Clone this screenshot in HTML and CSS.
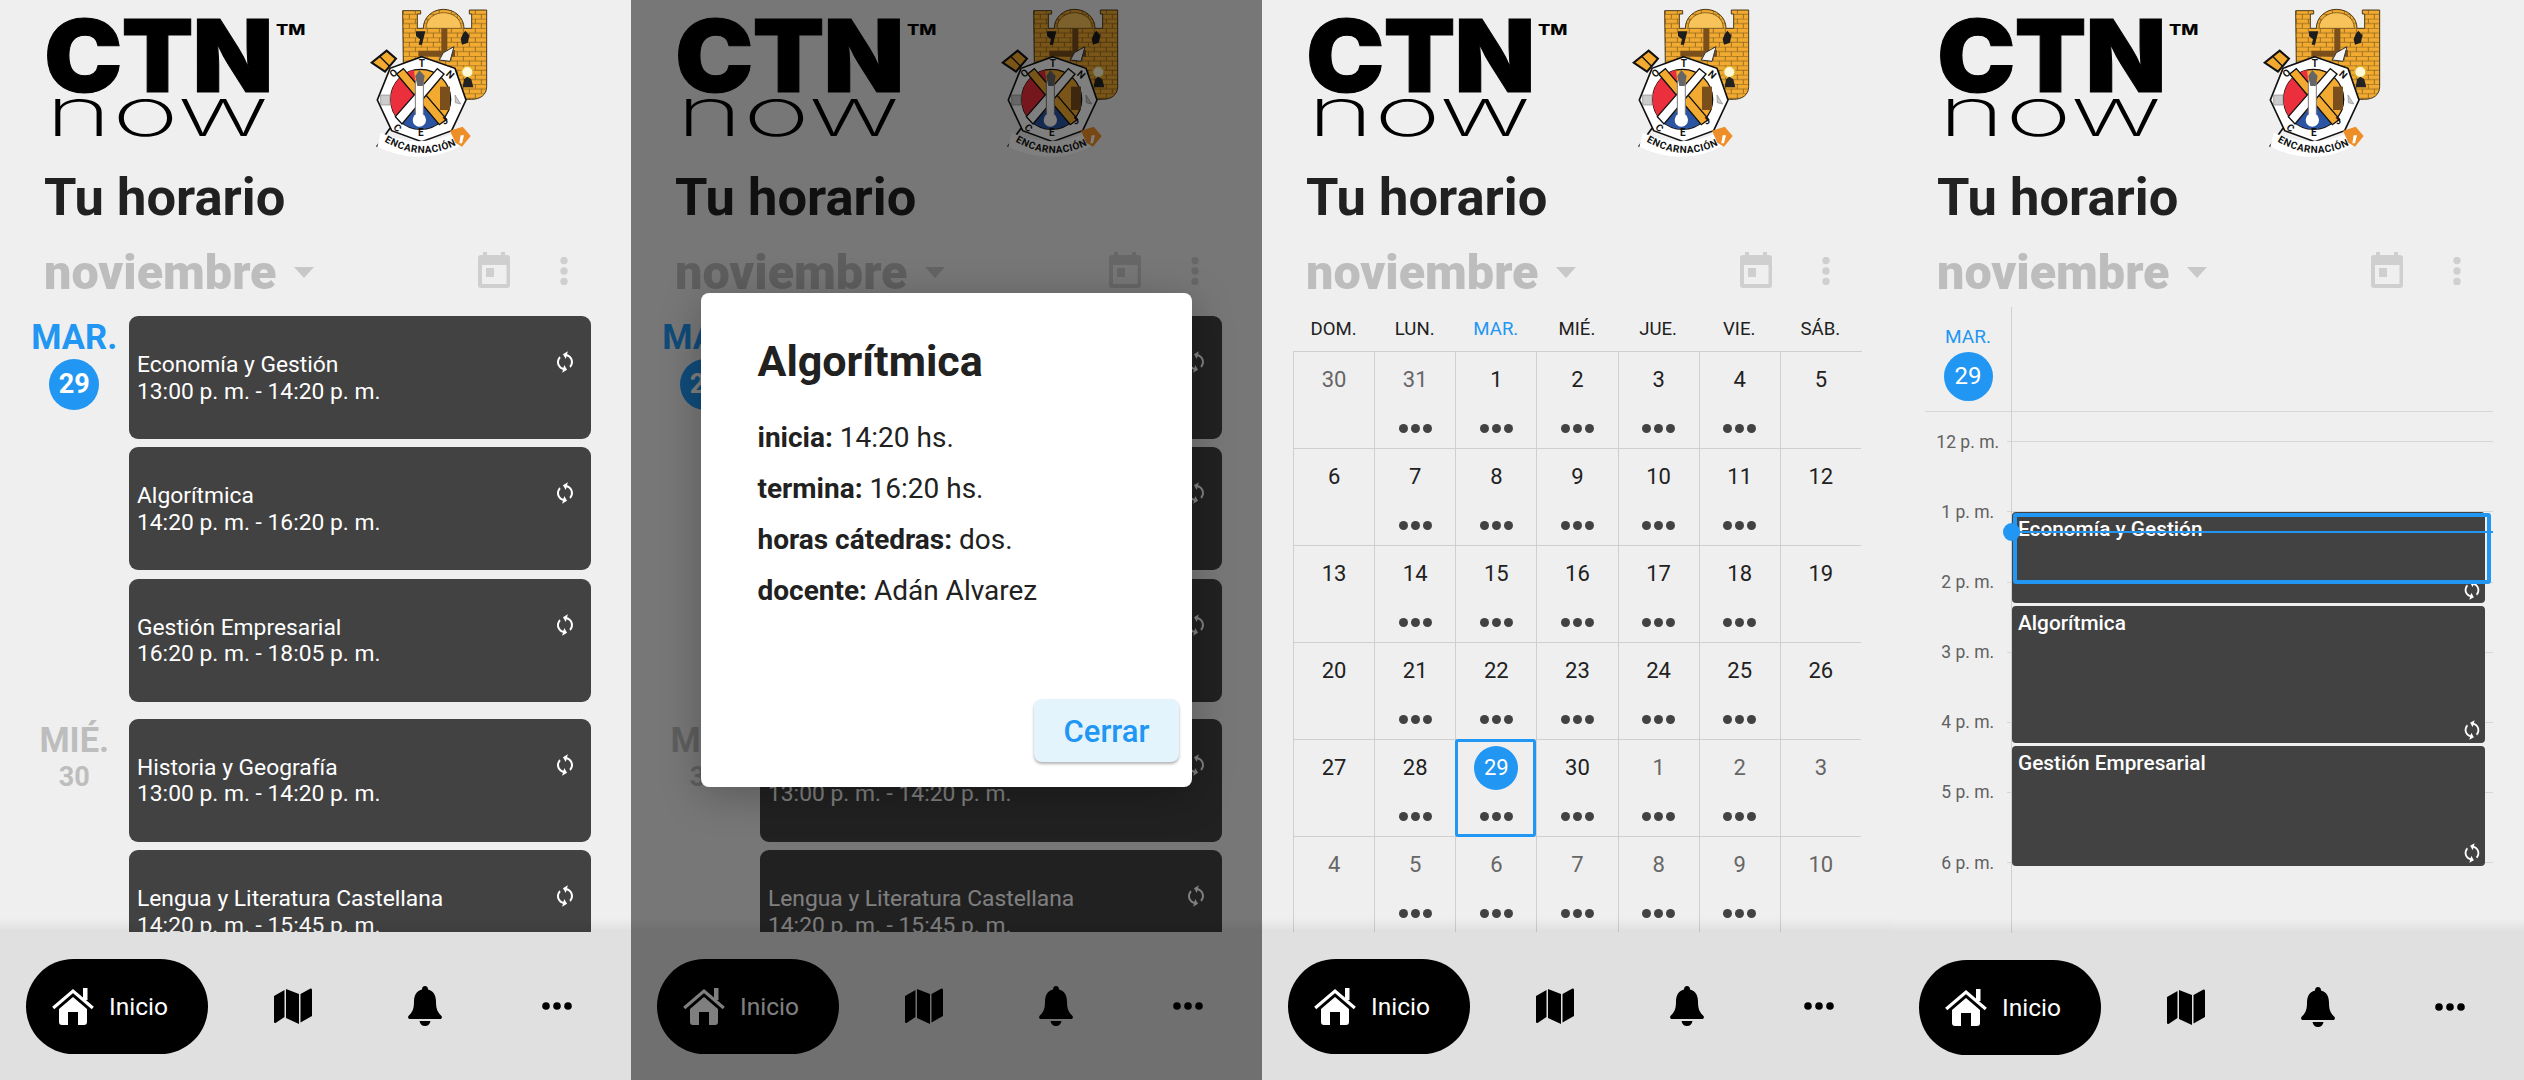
FILE: index.html
```html
<!DOCTYPE html>
<html lang="es">
    <head>
        <title>CTN now</title>
        <link rel="stylesheet" href="styles.css">
    </head>
    <body>
        <svg class="sprite" xmlns="http://www.w3.org/2000/svg">
            <defs>
                <pattern id="bricks" width="36" height="28" patternUnits="userSpaceOnUse">
                    <rect width="36" height="28" fill="#f3aa30"/>
                    <path d="M0 .7H36M0 14.7H36M10 0V14M28 14V28" stroke="#8a6420" stroke-width="2.4" fill="none"/>
                </pattern>
                <path id="crest-band" d="M133 424Q245 490 354 432"/>
            </defs>
            <symbol id="crest" viewBox="0 0 540 510">
                <path d="M188 32H242V42H232V85H250C250 50 280 28 310 28C342 28 372 50 372 85H395V42H388V30H440V260C440 285 420 298 395 298H340L190 200Z" fill="url(#bricks)" stroke="#4a3a1a" stroke-width="3"/>
                <path d="M258 85C258 55 285 38 310 38C338 38 364 55 364 85Z" fill="#f8c35a" stroke="#8a6420" stroke-width="3"/>
                <path d="M304 85H322V150H345V170H300L235 168V152H304Z" fill="#7a4f1c"/>
                <path d="M228 94H256L250 118L246 134H236L240 118L228 108ZM368 102L376 92L388 106L384 128L366 134L362 118Z" fill="#1d1d1d"/>
                <path d="M342 140L330 184L298 180L310 158Z" fill="#f4f4f4" stroke="#333" stroke-width="3"/>
                <path d="M135 215L95 188L140 152L168 176Z" fill="#f3aa30" stroke="#111" stroke-width="6"/>
                <path d="M118 168L150 200" stroke="#111" stroke-width="4"/>
                <circle cx="382" cy="216" r="17" fill="#fff8d8" stroke="#e5b52c" stroke-width="4"/>
                <path d="M368 262L372 238L382 230L394 238L400 262Z" fill="#222"/>
                <path d="M245 170L345 205L378 300L335 392L245 425L155 392L112 300L150 205Z" fill="#fff" stroke="#111" stroke-width="5"/>
                <circle cx="242" cy="298" r="90" fill="#f3aa30" stroke="#111" stroke-width="4"/>
                <path d="M222 210A90 90 0 0 0 175 358L232 298Z" fill="#ec2f3c"/>
                <path d="M186 368A90 90 0 0 0 310 356L245 310Z" fill="#2b55a3"/>
                <path d="M300 260H330V330H300Z" fill="#7a4f1c"/>
                <path d="M170 222L190 206L320 358L298 374Z" fill="#f3aa30" stroke="#111" stroke-width="4"/>
                <path d="M312 222L292 206L166 350L186 372Z" fill="#fff" stroke="#111" stroke-width="4"/>
                <rect x="226" y="238" width="24" height="112" rx="8" fill="#fff" stroke="#777" stroke-width="3"/>
                <circle cx="238" cy="360" r="20" fill="#fff"/>
                <path d="M238 210L254 228L248 258H232L226 228Z" fill="#666"/>
                <path d="M345 285L362 312L346 308ZM122 285H150V315H122Z" fill="#ccc" stroke="#888" stroke-width="2"/>
                <path d="M110 440L150 385" stroke="#111" stroke-width="5"/>
                <path d="M122 398Q245 452 358 392L372 432Q245 505 112 440Z" fill="#fff"/>
                <text class="crest-letter" x="160" y="234" transform="rotate(-42 160 234)">O</text>
                <text class="crest-letter" x="236" y="200">T</text>
                <text class="crest-letter" x="316" y="224" transform="rotate(42 316 224)">N</text>
                <text class="crest-letter" x="158" y="385" transform="rotate(42 158 385)">C</text>
                <text class="crest-letter" x="234" y="408">E</text>
                <text class="crest-letter" x="314" y="376" transform="rotate(-42 314 376)">J</text>
                <text class="crest-band-text"><textPath href="#crest-band" textLength="226">ENCARNACIÓN</textPath></text>
                <path d="M330 392L368 380L392 408L366 440L346 428Z" fill="#ee8e28"/>
                <path d="M362 406H372L366 430H358Z" fill="#fff"/>
            </symbol>
            <symbol id="i-home" viewBox="0 0 42 37">
                <path d="M31 0H35.5V12H31Z" fill="currentColor"/>
                <path d="M1.2 20L21 3L40.8 20" fill="none" stroke="currentColor" stroke-width="3.2"/>
                <path d="M7 21L21 9L35 21V34Q35 37 32 37H26V24H16V37H10Q7 37 7 34Z" fill="currentColor"/>
            </symbol>
            <symbol id="i-map" viewBox="0 0 38 36">
                <path d="M0 8L10.500 2V29L1.500 35Q0 35.500 0 33.500Z M12 1L25 6V36L12 30Z M26.500 6L36.500 .5Q38 0 38 2V28L26.500 34.500Z" fill="currentColor"/>
            </symbol>
            <symbol id="i-bell" viewBox="0 0 34 40">
                <path d="M17 0C15 0 14 1.500 14 3.500C8 5 6 10 6 16C6 24 3.500 27 .5 30C-.5 31.500 .5 33 2 33H32C33.500 33 34.500 31.500 33.500 30C30.500 27 28 24 28 16C28 10 26 5 20 3.500C20 1.500 19 0 17 0ZM11.500 35H22.500C22 38 20 40 17 40C14 40 12 38 11.500 35Z" fill="currentColor"/>
            </symbol>
            <symbol id="i-more" viewBox="0 0 30 10">
                <circle cx="4" cy="5" r="3.800" fill="currentColor"/>
                <circle cx="15" cy="5" r="3.800" fill="currentColor"/>
                <circle cx="26" cy="5" r="3.800" fill="currentColor"/>
            </symbol>
            <symbol id="i-sync" viewBox="0 0 24 24">
                <path d="M12 4V1L8 5l4 4V6c3.310 0 6 2.690 6 6 0 1.010-.25 1.970-.7 2.800l1.460 1.460C19.540 15.030 20 13.570 20 12c0-4.420-3.580-8-8-8zm0 14c-3.310 0-6-2.690-6-6 0-1.010.25-1.970.7-2.800L5.240 7.740C4.460 8.970 4 10.430 4 12c0 4.420 3.580 8 8 8v3l4-4-4-4v3z" fill="currentColor"/>
            </symbol>
            <symbol id="i-cal" viewBox="0 0 32 36">
                <path fill-rule="evenodd" d="M5 0H9V3H23V0H27V3H29Q32 3 32 6V33Q32 36 29 36H3Q0 36 0 33V6Q0 3 3 3H5ZM4 13V32H28.500V13Z M8 16H16V25H8Z" fill="currentColor"/>
            </symbol>
            <symbol id="i-kebab" viewBox="0 0 8 28">
                <circle cx="4" cy="3.500" r="3.700" fill="currentColor"/>
                <circle cx="4" cy="14" r="3.700" fill="currentColor"/>
                <circle cx="4" cy="24.500" r="3.700" fill="currentColor"/>
            </symbol>
        </svg>

        <div class="screens">
            <!-- agenda -->
            <section class="phone">
                <header class="brand">
                    <div class="logo">
                        <span class="logo-ctn">CTN</span><span class="logo-tm">TM</span>
                        <span class="logo-now">now</span>
                    </div>
                    <svg class="crest"><use href="#crest"/></svg>
                </header>
                <h1 class="title">Tu horario</h1>
                <div class="month-bar">
                    <span class="month">noviembre</span>
                    <span class="month-arrow"></span>
                    <div class="spacer"></div>
                    <svg class="icon-cal"><use href="#i-cal"/></svg>
                    <svg class="icon-kebab"><use href="#i-kebab"/></svg>
                </div>
                <main class="content agenda">
                    <div class="day-group">
                        <div class="day-col">
                            <div class="day-name today">MAR.</div>
                            <div class="day-badge">29</div>
                        </div>
                        <div class="day-cards">
                            <div class="card"><p>Economía y Gestión<br>13:00 p. m. - 14:20 p. m.</p><svg class="card-sync"><use href="#i-sync"/></svg></div>
                            <div class="card"><p>Algorítmica<br>14:20 p. m. - 16:20 p. m.</p><svg class="card-sync"><use href="#i-sync"/></svg></div>
                            <div class="card"><p>Gestión Empresarial<br>16:20 p. m. - 18:05 p. m.</p><svg class="card-sync"><use href="#i-sync"/></svg></div>
                        </div>
                    </div>
                    <div class="day-group">
                        <div class="day-col">
                            <div class="day-name">MIÉ.</div>
                            <div class="day-num">30</div>
                        </div>
                        <div class="day-cards">
                            <div class="card"><p>Historia y Geografía<br>13:00 p. m. - 14:20 p. m.</p><svg class="card-sync"><use href="#i-sync"/></svg></div>
                            <div class="card"><p>Lengua y Literatura Castellana<br>14:20 p. m. - 15:45 p. m.</p><svg class="card-sync"><use href="#i-sync"/></svg></div>
                        </div>
                    </div>
                </main>
                <nav class="tabbar">
                    <a class="tab-active" href="#"><svg class="icon-home"><use href="#i-home"/></svg>Inicio</a>
                    <a class="tab" href="#"><svg class="icon-map"><use href="#i-map"/></svg></a>
                    <a class="tab" href="#"><svg class="icon-bell"><use href="#i-bell"/></svg></a>
                    <a class="tab" href="#"><svg class="icon-more"><use href="#i-more"/></svg></a>
                </nav>
            </section>

            <!-- agenda with the class dialog open -->
            <section class="phone">
                <header class="brand">
                    <div class="logo">
                        <span class="logo-ctn">CTN</span><span class="logo-tm">TM</span>
                        <span class="logo-now">now</span>
                    </div>
                    <svg class="crest"><use href="#crest"/></svg>
                </header>
                <h1 class="title">Tu horario</h1>
                <div class="month-bar">
                    <span class="month">noviembre</span>
                    <span class="month-arrow"></span>
                    <div class="spacer"></div>
                    <svg class="icon-cal"><use href="#i-cal"/></svg>
                    <svg class="icon-kebab"><use href="#i-kebab"/></svg>
                </div>
                <main class="content agenda">
                    <div class="day-group">
                        <div class="day-col">
                            <div class="day-name today">MAR.</div>
                            <div class="day-badge">29</div>
                        </div>
                        <div class="day-cards">
                            <div class="card"><p>Economía y Gestión<br>13:00 p. m. - 14:20 p. m.</p><svg class="card-sync"><use href="#i-sync"/></svg></div>
                            <div class="card"><p>Algorítmica<br>14:20 p. m. - 16:20 p. m.</p><svg class="card-sync"><use href="#i-sync"/></svg></div>
                            <div class="card"><p>Gestión Empresarial<br>16:20 p. m. - 18:05 p. m.</p><svg class="card-sync"><use href="#i-sync"/></svg></div>
                        </div>
                    </div>
                    <div class="day-group">
                        <div class="day-col">
                            <div class="day-name">MIÉ.</div>
                            <div class="day-num">30</div>
                        </div>
                        <div class="day-cards">
                            <div class="card"><p>Historia y Geografía<br>13:00 p. m. - 14:20 p. m.</p><svg class="card-sync"><use href="#i-sync"/></svg></div>
                            <div class="card"><p>Lengua y Literatura Castellana<br>14:20 p. m. - 15:45 p. m.</p><svg class="card-sync"><use href="#i-sync"/></svg></div>
                        </div>
                    </div>
                </main>
                <nav class="tabbar">
                    <a class="tab-active" href="#"><svg class="icon-home"><use href="#i-home"/></svg>Inicio</a>
                    <a class="tab" href="#"><svg class="icon-map"><use href="#i-map"/></svg></a>
                    <a class="tab" href="#"><svg class="icon-bell"><use href="#i-bell"/></svg></a>
                    <a class="tab" href="#"><svg class="icon-more"><use href="#i-more"/></svg></a>
                </nav>
                <div class="scrim"></div>
                <div class="dialog">
                    <h2>Algorítmica</h2>
                    <p><b>inicia:</b> 14:20 hs.</p>
                    <p><b>termina:</b> 16:20 hs.</p>
                    <p><b>horas cátedras:</b> dos.</p>
                    <p><b>docente:</b> Adán Alvarez</p>
                    <button class="dialog-close">Cerrar</button>
                </div>
            </section>

            <!-- month view -->
            <section class="phone">
                <header class="brand">
                    <div class="logo">
                        <span class="logo-ctn">CTN</span><span class="logo-tm">TM</span>
                        <span class="logo-now">now</span>
                    </div>
                    <svg class="crest"><use href="#crest"/></svg>
                </header>
                <h1 class="title">Tu horario</h1>
                <div class="month-bar">
                    <span class="month">noviembre</span>
                    <span class="month-arrow"></span>
                    <div class="spacer"></div>
                    <svg class="icon-cal"><use href="#i-cal"/></svg>
                    <svg class="icon-kebab"><use href="#i-kebab"/></svg>
                </div>
                <main class="content month-view">
                    <div class="cal-head">
                        <span>DOM.</span><span>LUN.</span><span class="today">MAR.</span><span>MIÉ.</span><span>JUE.</span><span>VIE.</span><span>SÁB.</span>
                    </div>
                    <div class="cal-grid">
                        <div class="cell other"><span class="num">30</span></div>
                        <div class="cell other"><span class="num">31</span><div class="dots"><i></i><i></i><i></i></div></div>
                        <div class="cell"><span class="num">1</span><div class="dots"><i></i><i></i><i></i></div></div>
                        <div class="cell"><span class="num">2</span><div class="dots"><i></i><i></i><i></i></div></div>
                        <div class="cell"><span class="num">3</span><div class="dots"><i></i><i></i><i></i></div></div>
                        <div class="cell"><span class="num">4</span><div class="dots"><i></i><i></i><i></i></div></div>
                        <div class="cell"><span class="num">5</span></div>

                        <div class="cell"><span class="num">6</span></div>
                        <div class="cell"><span class="num">7</span><div class="dots"><i></i><i></i><i></i></div></div>
                        <div class="cell"><span class="num">8</span><div class="dots"><i></i><i></i><i></i></div></div>
                        <div class="cell"><span class="num">9</span><div class="dots"><i></i><i></i><i></i></div></div>
                        <div class="cell"><span class="num">10</span><div class="dots"><i></i><i></i><i></i></div></div>
                        <div class="cell"><span class="num">11</span><div class="dots"><i></i><i></i><i></i></div></div>
                        <div class="cell"><span class="num">12</span></div>

                        <div class="cell"><span class="num">13</span></div>
                        <div class="cell"><span class="num">14</span><div class="dots"><i></i><i></i><i></i></div></div>
                        <div class="cell"><span class="num">15</span><div class="dots"><i></i><i></i><i></i></div></div>
                        <div class="cell"><span class="num">16</span><div class="dots"><i></i><i></i><i></i></div></div>
                        <div class="cell"><span class="num">17</span><div class="dots"><i></i><i></i><i></i></div></div>
                        <div class="cell"><span class="num">18</span><div class="dots"><i></i><i></i><i></i></div></div>
                        <div class="cell"><span class="num">19</span></div>

                        <div class="cell"><span class="num">20</span></div>
                        <div class="cell"><span class="num">21</span><div class="dots"><i></i><i></i><i></i></div></div>
                        <div class="cell"><span class="num">22</span><div class="dots"><i></i><i></i><i></i></div></div>
                        <div class="cell"><span class="num">23</span><div class="dots"><i></i><i></i><i></i></div></div>
                        <div class="cell"><span class="num">24</span><div class="dots"><i></i><i></i><i></i></div></div>
                        <div class="cell"><span class="num">25</span><div class="dots"><i></i><i></i><i></i></div></div>
                        <div class="cell"><span class="num">26</span></div>

                        <div class="cell"><span class="num">27</span></div>
                        <div class="cell"><span class="num">28</span><div class="dots"><i></i><i></i><i></i></div></div>
                        <div class="cell selected"><span class="num">29</span><div class="dots"><i></i><i></i><i></i></div></div>
                        <div class="cell"><span class="num">30</span><div class="dots"><i></i><i></i><i></i></div></div>
                        <div class="cell other"><span class="num">1</span><div class="dots"><i></i><i></i><i></i></div></div>
                        <div class="cell other"><span class="num">2</span><div class="dots"><i></i><i></i><i></i></div></div>
                        <div class="cell other"><span class="num">3</span></div>

                        <div class="cell other"><span class="num">4</span></div>
                        <div class="cell other"><span class="num">5</span><div class="dots"><i></i><i></i><i></i></div></div>
                        <div class="cell other"><span class="num">6</span><div class="dots"><i></i><i></i><i></i></div></div>
                        <div class="cell other"><span class="num">7</span><div class="dots"><i></i><i></i><i></i></div></div>
                        <div class="cell other"><span class="num">8</span><div class="dots"><i></i><i></i><i></i></div></div>
                        <div class="cell other"><span class="num">9</span><div class="dots"><i></i><i></i><i></i></div></div>
                        <div class="cell other"><span class="num">10</span></div>
                    </div>
                </main>
                <nav class="tabbar">
                    <a class="tab-active" href="#"><svg class="icon-home"><use href="#i-home"/></svg>Inicio</a>
                    <a class="tab" href="#"><svg class="icon-map"><use href="#i-map"/></svg></a>
                    <a class="tab" href="#"><svg class="icon-bell"><use href="#i-bell"/></svg></a>
                    <a class="tab" href="#"><svg class="icon-more"><use href="#i-more"/></svg></a>
                </nav>
            </section>

            <!-- day view -->
            <section class="phone">
                <header class="brand">
                    <div class="logo">
                        <span class="logo-ctn">CTN</span><span class="logo-tm">TM</span>
                        <span class="logo-now">now</span>
                    </div>
                    <svg class="crest"><use href="#crest"/></svg>
                </header>
                <h1 class="title">Tu horario</h1>
                <div class="month-bar">
                    <span class="month">noviembre</span>
                    <span class="month-arrow"></span>
                    <div class="spacer"></div>
                    <svg class="icon-cal"><use href="#i-cal"/></svg>
                    <svg class="icon-kebab"><use href="#i-kebab"/></svg>
                </div>
                <main class="content week">
                    <div class="week-head">
                        <div class="week-day">MAR.</div>
                        <div class="week-badge">29</div>
                    </div>
                    <div class="hours">
                        <div class="hour"><span>12 p. m.</span><i></i></div>
                        <div class="hour"><span>1 p. m.</span><i></i></div>
                        <div class="hour"><span>2 p. m.</span><i></i></div>
                        <div class="hour"><span>3 p. m.</span><i></i></div>
                        <div class="hour"><span>4 p. m.</span><i></i></div>
                        <div class="hour"><span>5 p. m.</span><i></i></div>
                        <div class="hour"><span>6 p. m.</span><i></i></div>
                    </div>
                    <div class="events">
                        <div class="event ev-short">Economía y Gestión<svg class="event-sync"><use href="#i-sync"/></svg></div>
                        <div class="event ev-long">Algorítmica<svg class="event-sync"><use href="#i-sync"/></svg></div>
                        <div class="event ev-mid">Gestión Empresarial<svg class="event-sync"><use href="#i-sync"/></svg></div>
                    </div>
                    <div class="event-focus"></div>
                    <div class="now-line"></div>
                </main>
                <nav class="tabbar">
                    <a class="tab-active" href="#"><svg class="icon-home"><use href="#i-home"/></svg>Inicio</a>
                    <a class="tab" href="#"><svg class="icon-map"><use href="#i-map"/></svg></a>
                    <a class="tab" href="#"><svg class="icon-bell"><use href="#i-bell"/></svg></a>
                    <a class="tab" href="#"><svg class="icon-more"><use href="#i-more"/></svg></a>
                </nav>
            </section>
        </div>
    </body>
</html>
```

FILE: styles.css
```css
* {
    box-sizing: border-box;
}
body {
    margin: 0;
    font-family: Roboto, "Liberation Sans", sans-serif;
    color: #212121;
    overflow: hidden;
}
.sprite {
    position: absolute;
    width: 0;
    height: 0;
}
.screens {
    display: grid;
    grid-template-columns: repeat(4, 631px);
}
.phone {
    position: relative;
    height: 1080px;
    display: flex;
    flex-direction: column;
    overflow: hidden;
    background: #efefef;
}
.spacer {
    flex-grow: 1;
}

/* header */
.brand {
    height: 166px;
    flex-shrink: 0;
    display: flex;
    padding-left: 44px;
}
.logo {
    width: 328px;
    padding-top: 20px;
    font-family: Inter, sans-serif;
    color: #000;
}
.logo-ctn {
    display: inline-block;
    font-size: 100px;
    line-height: 72px;
    font-weight: 900;
    letter-spacing: -1px;
    -webkit-text-stroke: 1px #000;
    transform: scaleX(1.05);
    transform-origin: left;
}
.logo-tm {
    display: inline-block;
    vertical-align: top;
    margin: 3px 0 0 15px;
    font-size: 14px;
    line-height: 14px;
    font-weight: 800;
    transform: scaleX(1.3);
    transform-origin: left;
}
.logo-now {
    display: block;
    margin: -10px 0 0 1px;
    font-size: 68px;
    line-height: 50px;
    font-weight: 200;
    transform: scaleX(1.68);
    transform-origin: left;
}
.crest {
    width: 180px;
    height: 170px;
    margin-left: -32px;
}
.crest-letter {
    font: 700 30px Roboto, sans-serif;
    fill: #111;
}
.crest-band-text {
    font: 700 30px Roboto, sans-serif;
    fill: #111;
}
.title {
    margin: 0 0 0 44px;
    font-size: 52.5px;
    line-height: 62px;
    font-weight: 700;
    flex-shrink: 0;
}
.month-bar {
    height: 69px;
    margin-top: 10px;
    flex-shrink: 0;
    display: flex;
    align-items: center;
    padding: 0 63px 0 44px;
    color: #bdbdbd;
}
.month {
    font-size: 48.500px;
    font-weight: 900;
}
.month-arrow {
    width: 0;
    height: 0;
    margin-left: 17px;
    border-style: solid;
    border-width: 11px 10px 0;
    border-color: #c8c8c8 transparent transparent;
}
.icon-cal {
    width: 32px;
    height: 36px;
    margin-top: -5px;
    color: #cfcfcf;
}
.icon-kebab {
    width: 8px;
    height: 28px;
    margin-left: 50px;
    margin-top: -3px;
    color: #cfcfcf;
}

/* shared scroll area */
.content {
    flex: 1;
    min-height: 0;
    overflow: hidden;
}

/* agenda */
.agenda {
    padding: 9px 40px 0 19.500px;
}
.day-group {
    display: flex;
    margin-bottom: 17px;
}
.day-col {
    width: 109.500px;
    flex-shrink: 0;
    display: flex;
    flex-direction: column;
    align-items: center;
}
.day-name {
    font-size: 34.500px;
    line-height: 42px;
    font-weight: 700;
    color: #bdbdbd;
}
.day-name.today {
    color: #2196f3;
}
.day-badge {
    width: 50px;
    height: 51px;
    margin-top: 1px;
    border-radius: 50%;
    background: #2196f3;
    color: #fff;
    font-size: 27px;
    line-height: 51px;
    font-weight: 700;
    text-align: center;
}
.day-num {
    font-size: 27px;
    line-height: 30px;
    margin-top: 1px;
    font-weight: 700;
    color: #bdbdbd;
}
.day-cards {
    flex: 1;
    display: flex;
    flex-direction: column;
    gap: 8.400px;
}
.card {
    height: 123px;
    flex-shrink: 0;
    display: flex;
    align-items: center;
    justify-content: space-between;
    padding: 0 14px 0 8px;
    background: #424242;
    border-radius: 9px;
    color: #fff;
}
.card p {
    margin: 2px 0 0;
    font-size: 22.800px;
    line-height: 26.500px;
}
.card-sync {
    width: 24px;
    height: 24px;
    align-self: flex-start;
    margin-top: 34px;
    transform: rotate(15deg);
}

/* bottom nav */
.tabbar {
    position: relative;
    height: 148px;
    flex-shrink: 0;
    display: flex;
    align-items: center;
    padding-left: 26px;
    background: #e0e0e0;
    color: #000;
}
.tabbar::before {
    content: "";
    position: absolute;
    left: 0;
    right: 0;
    bottom: 100%;
    height: 14px;
    background: linear-gradient(rgba(0, 0, 0, 0), rgba(0, 0, 0, .07));
}
.tab-active {
    width: 182px;
    height: 95px;
    margin-right: 19px;
    display: flex;
    align-items: center;
    gap: 15px;
    padding-left: 26px;
    border-radius: 48px;
    background: #000;
    color: #fff;
    font-size: 24.500px;
    text-decoration: none;
}
.tab {
    width: 132px;
    display: flex;
    justify-content: center;
    color: #000;
}
.icon-home {
    width: 42px;
    height: 37px;
}
.icon-map {
    width: 38px;
    height: 36px;
}
.icon-bell {
    width: 34px;
    height: 40px;
}
.icon-more {
    width: 30px;
    height: 10px;
}

/* dialog */
.scrim {
    position: absolute;
    inset: 0;
    background: rgba(0, 0, 0, .5);
}
.dialog {
    position: absolute;
    left: 70px;
    top: 293px;
    width: 491px;
    height: 494px;
    display: flex;
    flex-direction: column;
    padding: 43px 13px 25px 56.500px;
    background: #fff;
    border-radius: 8px;
    box-shadow: 0 8px 40px rgba(0, 0, 0, .25);
}
.dialog h2 {
    margin: 0 0 26px;
    font-size: 43px;
    line-height: 50px;
    font-weight: 700;
}
.dialog p {
    margin: 0;
    font-size: 28px;
    line-height: 51px;
}
.dialog b {
    font-weight: 700;
}
.dialog-close {
    width: 145px;
    height: 63px;
    margin-top: auto;
    align-self: flex-end;
    border: 0;
    padding: 2px 0 0;
    border-radius: 8px;
    background: #e3f4fd;
    box-shadow: 0 2px 3px rgba(0, 0, 0, .3);
    color: #2196f3;
    font: 500 31px Roboto, sans-serif;
}

/* month view */
.month-view {
    padding-left: 31px;
}
.cal-head,
.cal-grid {
    display: grid;
    width: 569px;
    grid-template-columns: repeat(7, 81.140px);
}
.cal-head {
    height: 44px;
    line-height: 44px;
    font-size: 18.600px;
    text-align: center;
}
.cal-head .today {
    color: #2196f3;
}
.cal-grid {
    grid-auto-rows: 97px;
    border-top: 1px solid #cfcfcf;
}
.cell {
    position: relative;
    display: flex;
    flex-direction: column;
    align-items: center;
    border-left: 1px solid #cfcfcf;
    border-bottom: 1px solid #cfcfcf;
}
.cell.other {
    color: #666;
}
.num {
    width: 44px;
    height: 44px;
    margin-top: 6px;
    border-radius: 50%;
    font-size: 22px;
    line-height: 44px;
    text-align: center;
}
.dots {
    display: flex;
    gap: 3px;
    margin-top: 22px;
}
.dots i {
    width: 9px;
    height: 9px;
    border-radius: 50%;
    background: #424242;
}
.cell.selected::after {
    content: "";
    position: absolute;
    inset: -1px 0 -1px -1px;
    border: 3px solid #2196f3;
    border-radius: 3px;
}
.cell.selected .num {
    background: #2196f3;
    color: #fff;
}

/* day view */
.week {
    position: relative;
    margin-left: 32px;
    width: 568px;
    flex: none;
    height: 626px;
    overflow: visible;
}
.week::before {
    content: "";
    position: absolute;
    left: 86px;
    top: 0;
    bottom: 0;
    width: 1px;
    background: #cfcfcf;
}
.week-head {
    width: 86px;
    height: 105px;
    display: flex;
    flex-direction: column;
    align-items: center;
    padding-top: 17px;
}
.week-head::after {
    content: "";
    position: absolute;
    left: 0;
    right: 0;
    top: 104px;
    height: 1px;
    background: #d6d6d6;
}
.week-day {
    font-size: 19px;
    line-height: 26px;
    color: #2196f3;
}
.week-badge {
    width: 49px;
    height: 49px;
    margin-top: 2px;
    border-radius: 50%;
    background: #2196f3;
    color: #fff;
    font-size: 24px;
    line-height: 49px;
    text-align: center;
}
.hours {
    margin-top: -5.400px;
}
.hour {
    height: 70.170px;
    display: flex;
    align-items: center;
    color: #616161;
    font-size: 17.500px;
}
.hour span {
    width: 81.500px;
    padding-left: 4px;
    text-align: center;
}
.hour i {
    flex: 1;
    height: 1px;
    background: #d6d6d6;
}
.events {
    position: absolute;
    left: 87px;
    top: 204.700px;
    width: 473px;
    display: flex;
    flex-direction: column;
    gap: 3px;
}
.event {
    position: relative;
    padding: 4px 6px;
    background: #424242;
    border-radius: 4px;
    color: #fff;
    font-size: 20.800px;
    line-height: 26px;
    font-weight: 500;
}
.ev-short {
    height: 91.300px;
}
.ev-long {
    height: 137.300px;
}
.ev-mid {
    height: 120px;
}
.event-sync {
    position: absolute;
    right: 2px;
    bottom: 2px;
    width: 22px;
    height: 22px;
    transform: rotate(15deg);
}
.event-focus {
    position: absolute;
    left: 88px;
    top: 206px;
    width: 478px;
    height: 71px;
    border: 4px solid #2196f3;
    border-radius: 3px;
}
.now-line {
    position: absolute;
    left: 86px;
    right: 0;
    top: 224px;
    height: 2px;
    background: #2196f3;
}
.now-line::before {
    content: "";
    position: absolute;
    left: -8px;
    top: -8px;
    width: 17px;
    height: 18px;
    border-radius: 50%;
    background: #2196f3;
}
```
